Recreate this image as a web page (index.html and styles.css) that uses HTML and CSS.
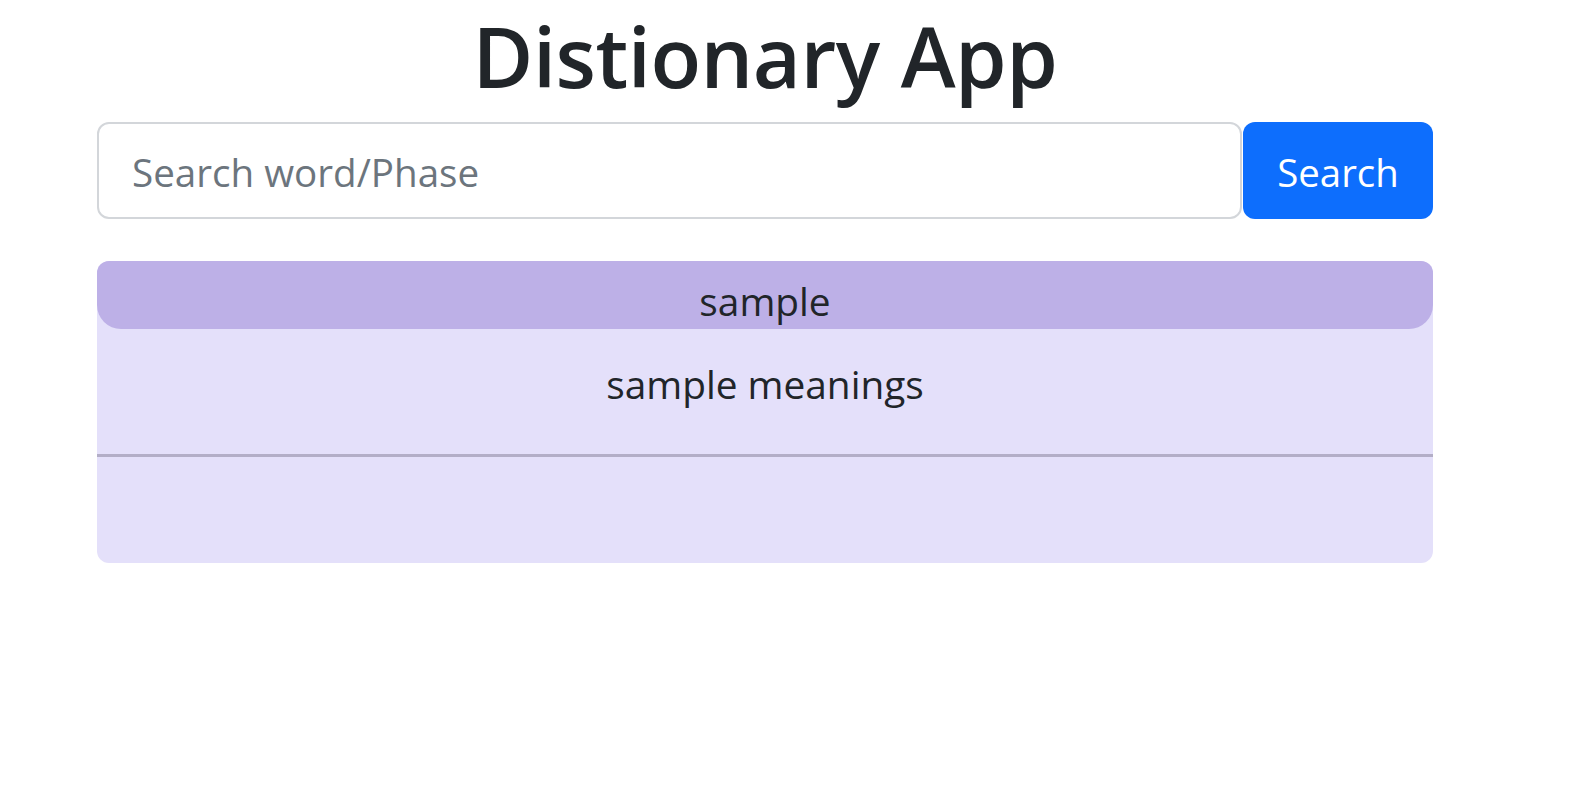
FILE: index.html
```html
<!DOCTYPE html>
<html lang="en">
<head>
<meta charset="utf-8">
<title>Distionary App</title>
<link rel="stylesheet" href="styles.css">
</head>
<body>
<main class="app">
  <h1 class="title">Distionary App</h1>
  <form class="search">
    <input class="search-input" type="text" placeholder="Search word/Phase">
    <button class="search-btn" type="button">Search</button>
  </form>
  <section class="card">
    <div class="card-header">sample</div>
    <div class="card-body">
      <p class="meaning">sample meanings</p>
    </div>
    <hr class="divider">
    <div class="card-foot"></div>
  </section>
</main>
</body>
</html>
```

FILE: styles.css
```css
* { box-sizing: border-box; }
html, body { margin: 0; padding: 0; background: #fff; }
body {
  font-family: "Open Sans", "Noto Sans", sans-serif;
  color: #212529;
}
.app {
  width: 1336px;
  margin-left: 97px;
  display: flex;
  flex-direction: column;
}
.title {
  margin: 0 0 10px;
  padding-top: 0;
  text-align: center;
  font-size: 83px;
  font-weight: 600;
  line-height: 112px;
  color: #212529;
  letter-spacing: -0.5px;
}
.search {
  display: flex;
  height: 97px;
  margin: 0;
  gap: 1px;
}
.search-input {
  flex: 1;
  min-width: 0;
  height: 97px;
  border: 2px solid #d3d6da;
  border-radius: 12px;
  padding: 2px 33px 0;
  font-family: inherit;
  font-size: 38.6px;
  color: #212529;
  outline: none;
}
.search-input::placeholder { color: #6c757d; }
.search-btn {
  width: 190px;
  height: 97px;
  border: none;
  border-radius: 12px;
  background: #0d6efd;
  color: #fff;
  font-family: inherit;
  font-size: 38.4px;
  padding: 2px 0 0;
}
.card {
  margin-top: 42px;
  height: 302px;
  background: #e4e0fa;
  border-radius: 12px;
  display: flex;
  flex-direction: column;
}
.card-header {
  height: 68px;
  background: #bdb0e7;
  border-radius: 12px 12px 24px 24px;
  text-align: center;
  font-size: 38.8px;
  line-height: 80px;
  color: #212529;
  overflow: hidden;
}
.card-body {
  height: 125px;
}
.meaning {
  margin: 0;
  text-align: center;
  font-size: 38.8px;
  line-height: 110px;
}
.divider {
  margin: 0;
  border: none;
  height: 3px;
  background: #b3aec7;
}
.card-foot { flex: 1; }
```
